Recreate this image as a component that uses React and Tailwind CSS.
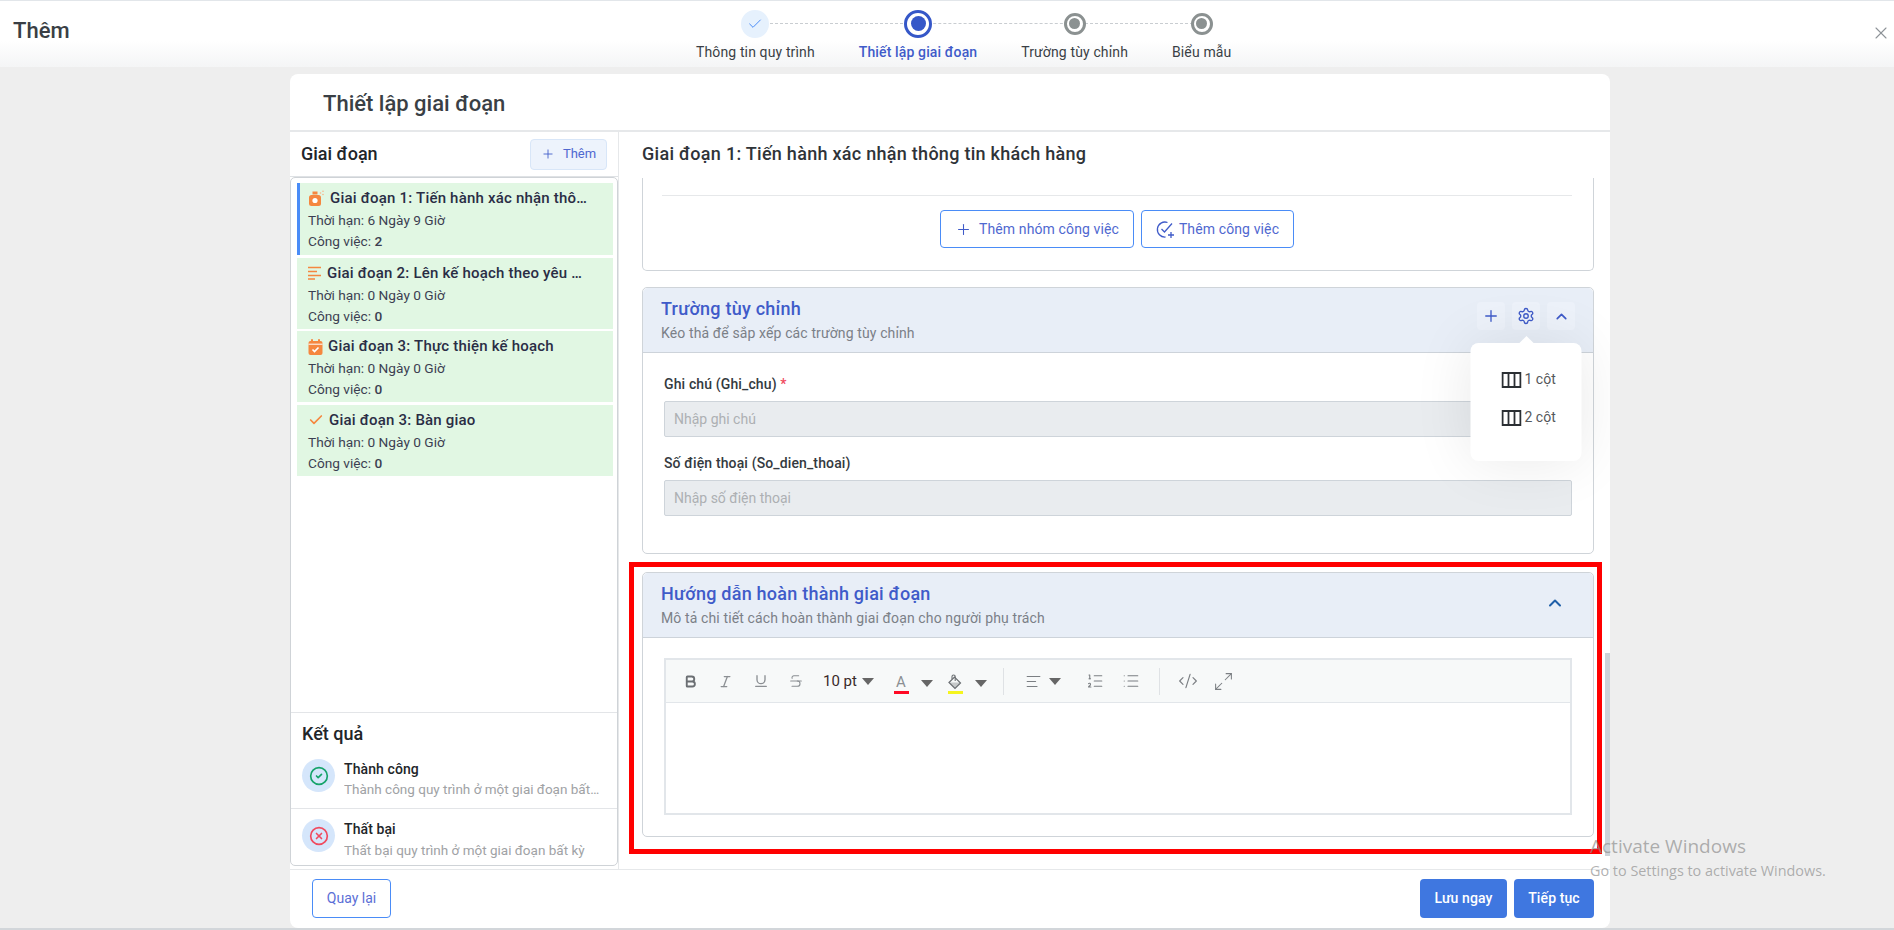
import React from 'react';
import {
  Check, X, Plus, Settings, ChevronUp, AlignLeft, CircleCheck, CircleX,
  Bold, Italic, Underline, Strikethrough, ListOrdered, List, CodeXml, Maximize2,
} from 'lucide-react';

const SprayIcon = () => (
  <svg width="17" height="17" viewBox="0 0 17 17" className="shrink-0">
    <rect x="4.5" y="1.5" width="5" height="3" fill="#f5873f" />
    <rect x="1" y="5" width="12" height="11" rx="2.5" fill="#f5873f" />
    <circle cx="7" cy="10.5" r="2.6" fill="#fff" />
    <circle cx="12.5" cy="3" r=".8" fill="#f9b48a" />
    <circle cx="15" cy="1.2" r=".8" fill="#f9b48a" />
    <circle cx="15" cy="4.5" r=".8" fill="#f9b48a" />
  </svg>
);

const LinesIcon = () => (
  <svg width="14" height="14" viewBox="0 0 14 14" stroke="#f5873f" strokeWidth="1.5" className="shrink-0">
    <path d="M0 1.5h13M0 5.5h9M0 9.5h13M0 13h7" />
  </svg>
);

const CalendarIcon = () => (
  <svg width="15" height="16" viewBox="0 0 15 16" className="shrink-0">
    <rect x="0.5" y="2" width="14" height="14" rx="2" fill="#f5873f" />
    <rect x="3" y="0" width="2" height="4" rx="1" fill="#f5873f" />
    <rect x="10" y="0" width="2" height="4" rx="1" fill="#f5873f" />
    <path d="M0.5 5.2h14" stroke="#fff" strokeWidth="1" />
    <path d="M4.5 10.5l2 2 4-4" stroke="#fff" strokeWidth="1.6" fill="none" />
  </svg>
);

const CheckPlusIcon = () => (
  <svg width="19" height="19" viewBox="0 0 19 19" fill="none" stroke="#3f5bc9" strokeWidth="1.3" className="shrink-0">
    <path d="M11.5 2.5A7.5 7.5 0 1 0 9.5 17" />
    <path d="M5.5 9l3 3L16 3.5" />
    <path d="M15 12v6M12 15h6" />
  </svg>
);

const ColumnsIcon = () => (
  <svg width="20" height="16" viewBox="0 0 20 16" fill="none" stroke="#2b2f33" className="shrink-0">
    <rect x="1" y="1" width="18" height="14" strokeWidth="2" />
    <path d="M7 1v14M13 1v14" strokeWidth="1.8" />
  </svg>
);

const BucketIcon = () => (
  <svg width="16" height="16" viewBox="0 0 16 16" className="shrink-0">
    <path d="M2 8.5 7.5 3l6 6L8 14.5z" fill="none" stroke="#6b6f73" strokeWidth="1.2" />
    <path d="M2 8.5h11.5L8 14.5z" fill="#6b6f73" opacity=".35" />
    <path d="M5 5V2.6a1.6 1.6 0 0 1 3.2 0V7" fill="none" stroke="#6b6f73" strokeWidth="1.1" />
  </svg>
);

const Caret = ({ className }) => (
  <svg width="12" height="7" viewBox="0 0 12 7" className={`shrink-0 ${className}`}>
    <path d="M0 0h12L6 7z" fill="#666" />
  </svg>
);

const stages = [
  { icon: <SprayIcon />, title: 'Giai đoạn 1: Tiến hành xác nhận thông tin khách hàng', time: '6 Ngày 9 Giờ', jobs: 2, active: true },
  { icon: <LinesIcon />, title: 'Giai đoạn 2: Lên kế hoạch theo yêu cầu khách hàng', time: '0 Ngày 0 Giờ', jobs: 0 },
  { icon: <CalendarIcon />, title: 'Giai đoạn 3: Thực thiện kế hoạch', time: '0 Ngày 0 Giờ', jobs: 0 },
  { icon: <Check size={16} color="#f5873f" strokeWidth={2.5} className="shrink-0" />, title: 'Giai đoạn 3: Bàn giao', time: '0 Ngày 0 Giờ', jobs: 0 },
];

const steps = [
  { label: 'Thông tin quy trình', state: 'done', line: 'w-[163px]' },
  { label: 'Thiết lập giai đoạn', state: 'active', line: 'w-[155px]' },
  { label: 'Trường tùy chỉnh', state: 'todo', line: 'w-[128px]' },
  { label: 'Biểu mẫu', state: 'todo' },
];

const Step = ({ label, state, line }) => (
  <div className="relative flex flex-col items-center">
    {line && <div className={`absolute left-1/2 top-[14px] border-t border-dashed border-[#c9cdd1] ${line}`} />}
    <div className="relative h-[29px] flex items-center justify-center">
      {state === 'done' && (
        <div className="w-[28px] h-[28px] rounded-full bg-[#e6f1fd] flex items-center justify-center">
          <Check size={16} color="#4a8cf7" strokeWidth={1.5} />
        </div>
      )}
      {state === 'active' && (
        <div className="w-[28px] h-[28px] rounded-full bg-white border-[3px] border-[#3557c8] flex items-center justify-center">
          <div className="w-[15px] h-[15px] rounded-full bg-[#3557c8]" />
        </div>
      )}
      {state === 'todo' && (
        <div className="w-[22px] h-[22px] rounded-full bg-white border-[3px] border-[#8b9191] flex items-center justify-center">
          <div className="w-[11px] h-[11px] rounded-full bg-[#8b9191]" />
        </div>
      )}
    </div>
    <div className={`mt-[4px] text-[14px] leading-[20px] tracking-[0.13px] whitespace-nowrap ${state === 'active' ? 'text-[#3f5bc9] font-medium' : 'text-[#3a3f45]'}`}>{label}</div>
  </div>
);

const CardHeader = ({ title, sub, children }) => (
  <div className="h-[65px] bg-[#e8eef7] border-b border-[#cdd3da] rounded-t-[5px] flex items-center justify-between pl-[18px]">
    <div>
      <div className="text-[18px] leading-[24px] tracking-[0.24px] text-[#3f5bc9] font-medium">{title}</div>
      <div className="mt-[2px] text-[14px] leading-[20px] tracking-[0.12px] text-[#7b8087]">{sub}</div>
    </div>
    {children}
  </div>
);

const IconBtn = ({ children }) => (
  <div className="relative w-[28px] h-[28px] rounded-[4px] bg-[#edf2fa] flex items-center justify-center">{children}</div>
);

const App = () => {
  return (
    <div className="relative h-[930px] overflow-hidden flex flex-col bg-[#eeeeee] font-['Roboto',sans-serif] border-t border-[#e2e6ea] border-b-2 border-b-[#d2d6da]">
      <header className="h-[66px] shrink-0 flex bg-linear-to-b from-white from-60% to-[#f4f5f6]">
        <div className="w-[696px] shrink-0 pl-[13px] pt-[15px] text-[22px] leading-[30px] font-medium text-[#3a3f45]">Thêm</div>
        <div className="flex gap-[44px] pt-[8px] items-start">
          {steps.map((s) => <Step key={s.label} {...s} />)}
        </div>
        <X size={20} color="#8e9398" strokeWidth={1.3} className="ml-auto mr-[3px] mt-[22px]" />
      </header>

      <main className="flex-1 min-h-0 pt-[7px] pl-[290px]">
        <div className="w-[1320px] h-[854px] bg-white rounded-[8px] flex flex-col">
          <div className="h-[58px] shrink-0 border-b-2 border-[#e6e8ea] pl-[33px] pt-[2px] flex items-center text-[22px] font-medium text-[#3a3f45]">Thiết lập giai đoạn</div>

          <div className="flex-1 min-h-0 flex">
            {/* cot trai */}
            <div className="w-[329px] shrink-0 border-r border-[#e6e8ea] flex flex-col pb-[3px]">
              <div className="h-[45px] shrink-0 border-b border-[#dfe2e5] flex items-center justify-between pl-[11px] pr-[11px]">
                <span className="text-[18px] font-medium text-[#212529] -mt-[2px]">Giai đoạn</span>
                <div className="w-[77px] h-[31px] rounded-[4px] bg-[#edf3fc] border border-[#d8e6f8] flex items-center justify-center gap-[8px] text-[13px] text-[#4f68d0]">
                  <Plus size={14} color="#3f5bc9" strokeWidth={1.5} />
                  Thêm
                </div>
              </div>
              <div className="flex-1 min-h-0 flex flex-col border border-[#cfd3d7] rounded-[5px]">
                <div className="flex-1 pt-[5px] pl-[6px] pr-[4px] flex flex-col gap-[2.5px]">
                  {stages.map((s) => (
                    <div key={s.title} className={`bg-[#e1f7e3] pt-[5px] text-[13.7px] leading-[21px] text-[#3c3f52] ${s.active ? 'h-[72px] border-l-[3px] border-[#4a8cf7] pl-[8px]' : 'h-[71px] pl-[11px]'}`}>
                      <div className="flex items-center gap-[5px] mb-[1px]">
                        {s.icon}
                        <div className="max-w-[258px] truncate text-[15px] font-medium tracking-[0.2px] text-[#2a2d45]">{s.title}</div>
                      </div>
                      <div>Thời hạn: {s.time}</div>
                      <div>Công việc: <span className="font-medium">{s.jobs}</span></div>
                    </div>
                  ))}
                </div>
                <div className="h-[153px] shrink-0 border-t border-[#e3e5e8]">
                  <div className="h-[41px] pl-[11px] flex items-center text-[18px] font-medium text-[#212529]">Kết quả</div>
                  <div className="h-[55px] pl-[11px] flex gap-[9px] border-b border-[#e3e5e8] pt-[5px]">
                    <div className="w-[33px] h-[33px] rounded-full bg-[#d5e6fb] flex items-center justify-center shrink-0">
                      <CircleCheck size={20} color="#16a36a" strokeWidth={2} />
                    </div>
                    <div className="min-w-0 w-[257px]">
                      <div className="text-[14px] leading-[20px] tracking-[0.1px] font-medium text-[#212529]">Thành công</div>
                      <div className="text-[13.5px] leading-[21px] text-[#a0a2a5] truncate">Thành công quy trình ở một giai đoạn bất kỳ</div>
                    </div>
                  </div>
                  <div className="h-[56px] pl-[11px] flex gap-[9px] pt-[10px]">
                    <div className="w-[33px] h-[33px] rounded-full bg-[#d5e6fb] flex items-center justify-center shrink-0">
                      <CircleX size={20} color="#f04a5f" strokeWidth={2} />
                    </div>
                    <div className="min-w-0 w-[257px]">
                      <div className="text-[14px] leading-[20px] tracking-[0.1px] font-medium text-[#212529]">Thất bại</div>
                      <div className="text-[13.5px] leading-[22px] text-[#a0a2a5] truncate">Thất bại quy trình ở một giai đoạn bất kỳ</div>
                    </div>
                  </div>
                </div>
              </div>
            </div>

            {/* cot phai */}
            <div className="flex-1 min-w-0 flex flex-col">
              <div className="h-[46px] shrink-0 pl-[23px] pb-[4px] flex items-center text-[18px] tracking-[0.28px] font-medium text-[#2f3338]">Giai đoạn 1: Tiến hành xác nhận thông tin khách hàng</div>
              <div className="relative flex-1 min-h-0 overflow-hidden pl-[23px] pr-[16px]">
                <div className="h-[93px] border-x border-b border-[#cfd4d9] rounded-b-[5px] px-[21px] pt-[17px]">
                  <div className="border-t border-[#e6e8ea] pt-[14px] flex justify-center gap-[7px] -ml-[2px] text-[14px] tracking-[0.12px] text-[#4f68d0]">
                    <div className="w-[194px] h-[38px] border border-[#4a8cf7] rounded-[4px] flex items-center justify-center gap-[7px]">
                      <Plus size={17} color="#3f5bc9" strokeWidth={1.5} />
                      Thêm nhóm công việc
                    </div>
                    <div className="w-[153px] h-[38px] border border-[#4a8cf7] rounded-[4px] flex items-center justify-center gap-[4px]">
                      <CheckPlusIcon />
                      Thêm công việc
                    </div>
                  </div>
                </div>

                <div className="mt-[16px] h-[267px] border border-[#cfd4d9] rounded-[5px]">
                  <CardHeader title="Trường tùy chỉnh" sub="Kéo thả để sắp xếp các trường tùy chỉnh">
                    <div className="flex gap-[7px] mr-[18px] -mt-[8px]">
                      <IconBtn><Plus size={18} color="#3f5bc9" strokeWidth={1.8} /></IconBtn>
                      <IconBtn>
                        <Settings size={18} color="#3f5bc9" strokeWidth={1.8} />
                        <div className="absolute z-20 top-[41px] left-1/2 -translate-x-1/2 w-[111px] h-[118px] bg-white rounded-[8px] shadow-[0_0_60px_rgba(0,0,0,0.09)] flex flex-col gap-[17px] pt-[26px] pl-[31px] text-[14px] leading-[21px] text-[#55585c]">
                          <div className="absolute -top-[5px] left-1/2 -ml-[5px] w-[10px] h-[10px] rotate-45 bg-white" />
                          <div className="flex items-center gap-[3px]"><ColumnsIcon />1 cột</div>
                          <div className="flex items-center gap-[3px]"><ColumnsIcon />2 cột</div>
                        </div>
                      </IconBtn>
                      <IconBtn><ChevronUp size={17} color="#3f5bc9" strokeWidth={2.4} /></IconBtn>
                    </div>
                  </CardHeader>
                  <div className="px-[21px] pt-[21px] text-[14px]">
                    <div className="leading-[20px] tracking-[0.13px] font-medium text-[#343a40]">Ghi chú (Ghi_chu) <span className="text-[#f04a5f]">*</span></div>
                    <div className="mt-[7px] h-[36px] bg-[#e9ecef] border border-[#ced4da] rounded-[2px] pl-[9px] flex items-center text-[#adb0b3]">Nhập ghi chú</div>
                    <div className="mt-[16px] leading-[20px] tracking-[0.13px] font-medium text-[#343a40]">Số điện thoại (So_dien_thoai)</div>
                    <div className="mt-[7px] h-[36px] bg-[#e9ecef] border border-[#ced4da] rounded-[2px] pl-[9px] flex items-center text-[#adb0b3]">Nhập số điện thoại</div>
                  </div>
                </div>

                <div className="mt-[18px] h-[265px] border border-[#cfd4d9] rounded-[5px]">
                  <CardHeader title="Hướng dẫn hoàn thành giai đoạn" sub="Mô tả chi tiết cách hoàn thành giai đoạn cho người phụ trách">
                    <ChevronUp size={20} color="#1f5fa8" strokeWidth={2.4} className="mr-[28px] -mt-[4px]" />
                  </CardHeader>
                  <div className="px-[21px] pt-[20px]">
                    <div className="h-[157px] border-2 border-[#e2e6ea]">
                      <div className="h-[43px] bg-[#f7f9f9] border-b border-[#e2e6ea] flex items-center pl-[7px]">
                        <div className="w-[35px] flex justify-center"><Bold size={15} color="#6b6f73" strokeWidth={3} /></div>
                        <div className="w-[35px] flex justify-center"><Italic size={15} color="#8b8f93" strokeWidth={2} /></div>
                        <div className="w-[35px] flex justify-center"><Underline size={16} color="#8b8f93" strokeWidth={2} /></div>
                        <div className="w-[35px] flex justify-center"><Strikethrough size={16} color="#8b8f93" strokeWidth={1.6} /></div>
                        <span className="ml-[10px] w-[34px] text-[15px] whitespace-nowrap text-[#3a2a2a]">10 pt</span>
                        <Caret className="ml-[5px]" />
                        <div className="ml-[19px] w-[16px] flex flex-col items-center mt-[6px]">
                          <span className="text-[15px] leading-[17px] text-[#8b8f93]">A</span>
                          <div className="w-[15px] h-[3px] bg-[#ff0a25]" />
                        </div>
                        <Caret className="ml-[12px] mt-[4px]" />
                        <div className="ml-[14px] w-[16px] flex flex-col items-center mt-[6px]">
                          <BucketIcon />
                          <div className="mt-[1px] w-[15px] h-[3px] bg-[#f5f51e]" />
                        </div>
                        <Caret className="ml-[12px] mt-[4px]" />
                        <div className="ml-[16px] w-px h-[27px] bg-[#dfe2e5]" />
                        <AlignLeft size={17} color="#7b7f83" strokeWidth={1.5} className="ml-[21px]" />
                        <Caret className="ml-[7px]" />
                        <ListOrdered size={18} color="#7b7f83" strokeWidth={1.5} className="ml-[25px]" />
                        <List size={18} color="#7b7f83" strokeWidth={1.5} className="ml-[18px]" />
                        <div className="ml-[19px] w-px h-[27px] bg-[#dfe2e5]" />
                        <CodeXml size={20} color="#7b7f83" strokeWidth={1.4} className="ml-[18px]" />
                        <Maximize2 size={21} color="#7b7f83" strokeWidth={1.2} className="ml-[15px]" />
                      </div>
                    </div>
                  </div>
                </div>

                {/* thanh cuon */}
                <div className="absolute right-0 top-[475px] w-[5px] h-[203px] bg-[#cdd3d8]" />
              </div>
            </div>
          </div>

          <div className="h-[59px] shrink-0 border-t border-[#e6e8ea] flex items-center justify-between pl-[22px] pr-[16px] pb-[1px] text-[14px]">
            <div className="w-[79px] h-[39px] border border-[#4a8cf7] rounded-[4px] flex items-center justify-center text-[#5b6fd6]">Quay lại</div>
            <div className="flex gap-[7px] font-medium text-white tracking-[0.1px]">
              <div className="w-[87px] h-[39px] bg-[#3f77e0] rounded-[4px] flex items-center justify-center">Lưu ngay</div>
              <div className="w-[80px] h-[39px] bg-[#3f77e0] rounded-[4px] flex items-center justify-center">Tiếp tục</div>
            </div>
          </div>
        </div>
      </main>

      {/* khung do danh dau */}
      <div className="absolute left-[629px] top-[561px] w-[973px] h-[292px] border-[5px] border-[#ff0000] pointer-events-none" />

      {/* watermark windows */}
      <div className="absolute left-[1590px] top-[831px] font-['Open_Sans',sans-serif] text-[#8f8f8f]/70 pointer-events-none">
        <div className="text-[19px] leading-[29px]">Activate Windows</div>
        <div className="text-[14.4px] leading-[19px]">Go to Settings to activate Windows.</div>
      </div>
    </div>
  );
};

export default App;
